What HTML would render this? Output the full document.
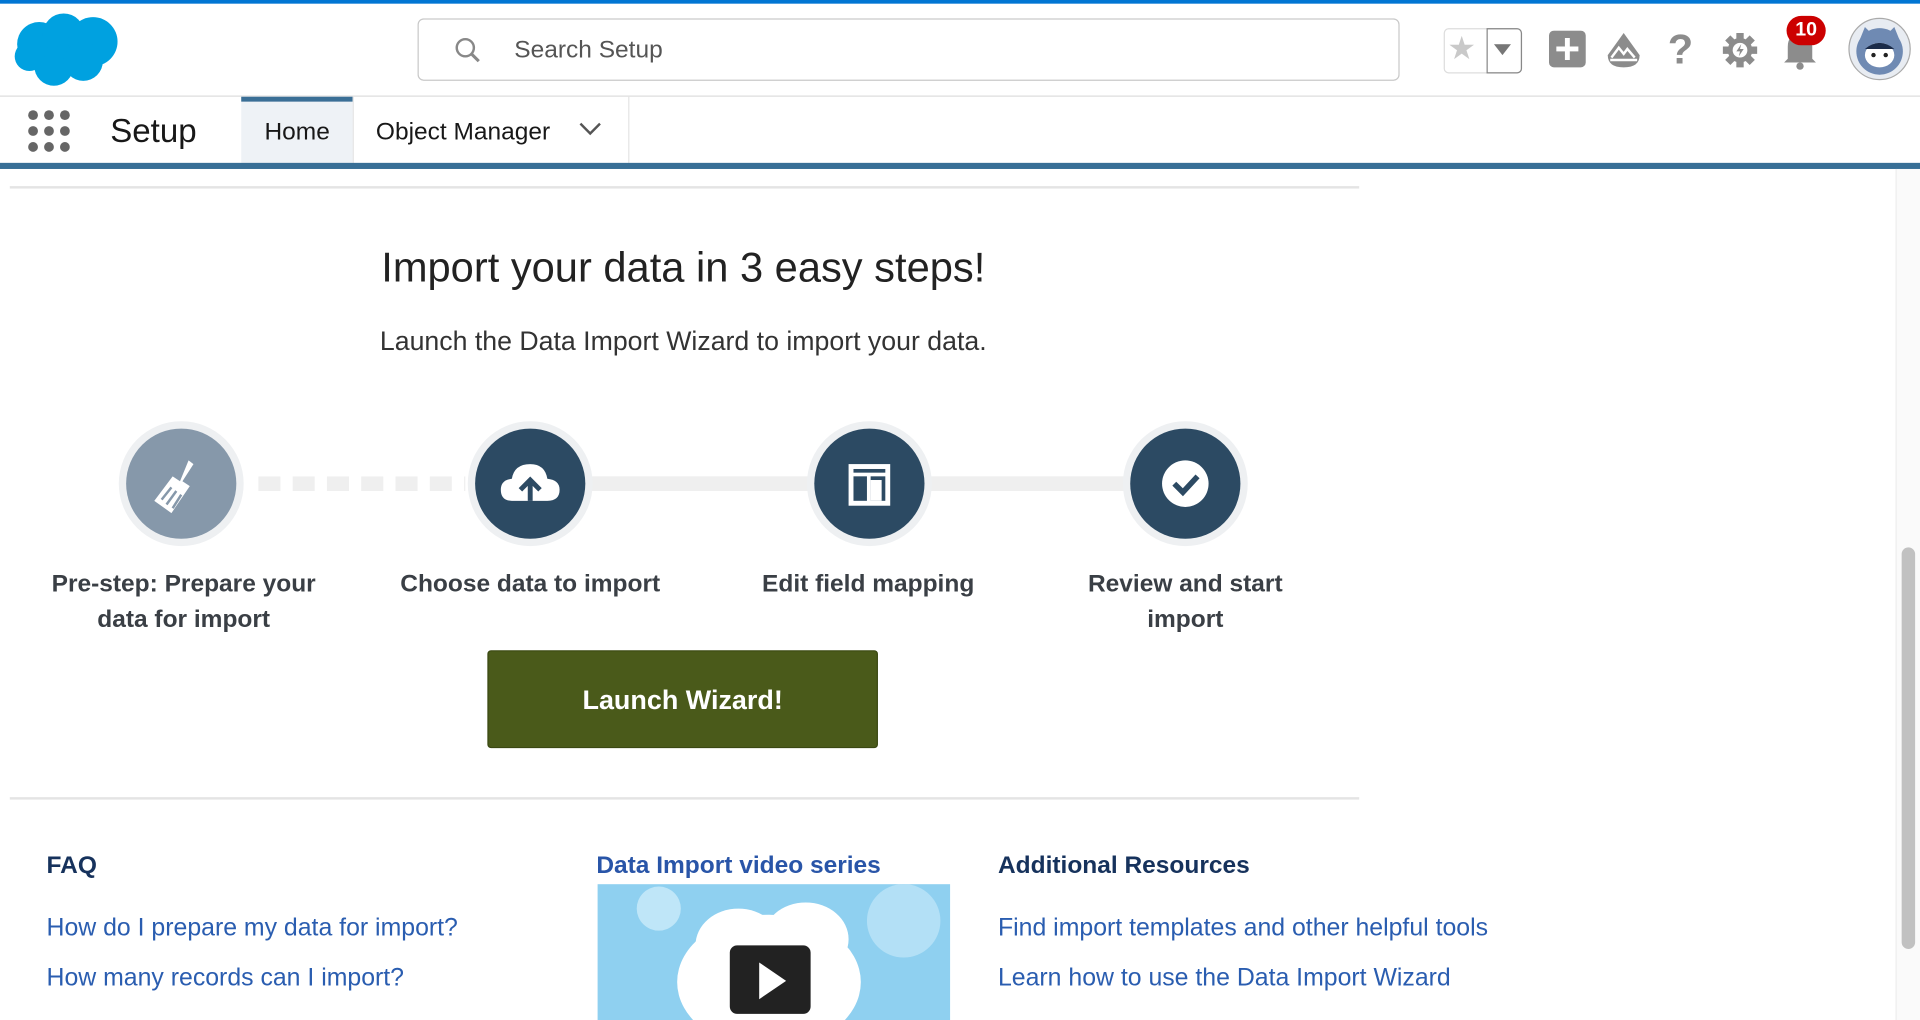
<!DOCTYPE html>
<html><head><meta charset="utf-8"><style>
html,body{margin:0;padding:0;width:1920px;height:1020px;overflow:hidden;background:#fff;font-family:"Liberation Sans",sans-serif}
#w{position:absolute;left:0;top:0;width:1568px;height:833px;transform:scale(1.2245);transform-origin:0 0;}
.a{position:absolute}
.lbl{position:absolute;font-weight:bold;font-size:20px;color:#3a3f45;text-align:center;line-height:29px;width:260px}
.lnk{position:absolute;font-size:20.3px;color:#2a5db0}
.h{position:absolute;font-size:20px;font-weight:bold;color:#16325c}
.circ{position:absolute;width:90px;height:90px;border-radius:50%;box-shadow:0 0 0 6px #eef0f2;}
</style></head><body><div id="w">
<div class="a" style="left:0;top:0;width:1568px;height:3px;background:#0176d3"></div>
<div class="a" style="left:0;top:78px;width:1568px;height:1px;background:#ddd"></div>
<svg class="a" style="left:10px;top:8px" width="90" height="64" viewBox="0 0 90 64"><g fill="#00a1e0"><circle cx="22" cy="28" r="18"/><circle cx="42" cy="20" r="17"/><circle cx="66" cy="26" r="20"/><circle cx="34" cy="46" r="16"/><circle cx="58" cy="42" r="16"/><circle cx="14" cy="38" r="12"/></g></svg>
<div class="a" style="left:341px;top:15px;width:800px;height:49px;border:1px solid #c9c9c9;border-radius:5px"></div>
<svg class="a" style="left:371px;top:30px" width="22" height="22" viewBox="0 0 22 22"><circle cx="9" cy="9" r="7" fill="none" stroke="#888" stroke-width="2"/><path d="M14 14l6 6" stroke="#888" stroke-width="2.5"/></svg>
<div class="a" style="left:420px;top:30px;font-size:20px;color:#555">Search Setup</div>
<div class="a" style="left:1179px;top:23px;width:62px;height:35px;border:1px solid #ddd;border-radius:4px"></div>
<div class="a" style="left:1214px;top:23px;width:27px;height:35px;border:1px solid #888;border-radius:0 4px 4px 0"></div>
<div class="a" style="left:1182px;top:24px;font-size:26px;color:#c9c9c9">★</div>
<svg class="a" style="left:1220px;top:36px" width="14" height="10"><path d="M0 0h14L7 9z" fill="#777"/></svg>
<svg class="a" style="left:1265px;top:25px" width="32" height="32"><rect width="30" height="30" rx="4" fill="#8c8c8c"/><path d="M15 6v18M6 15h18" stroke="#fff" stroke-width="4"/></svg>
<svg class="a" style="left:1310px;top:25px" width="32" height="32" viewBox="0 0 32 32"><path d="M16 2L3 20q0 10 13 10q13 0 13-10z" fill="#8c8c8c"/><path d="M6 22l6-8 4 5 3-4 6 7M5 24h22" stroke="#fff" stroke-width="2" fill="none"/></svg>
<div class="a" style="left:1362px;top:22px;font-size:34px;color:#8c8c8c;font-weight:bold">?</div>
<svg class="a" style="left:1405px;top:25px" width="32" height="32" viewBox="0 0 32 32"><circle cx="16" cy="16" r="10" fill="#8c8c8c"/><g stroke="#8c8c8c" stroke-width="6"><path d="M16 2v28M2 16h28M6 6l20 20M26 6L6 26"/></g><circle cx="16" cy="16" r="6" fill="#fff"/><path d="M17 11l-4 6h3l-1 4 4-6h-3z" fill="#8c8c8c"/></svg>
<svg class="a" style="left:1454px;top:22px" width="32" height="36" viewBox="0 0 32 36"><path d="M6 26V16q0-10 10-10q10 0 10 10v10l3 3H3z" fill="#8c8c8c"/><circle cx="16" cy="32" r="3" fill="#8c8c8c"/></svg>
<div class="a" style="left:1459px;top:13px;width:32px;height:24px;border-radius:12px;background:#c00;color:#fff;font-weight:bold;font-size:16px;text-align:center;line-height:24px">10</div>
<svg class="a" style="left:1509px;top:14px" width="52" height="52" viewBox="0 0 52 52"><circle cx="26" cy="26" r="25" fill="#e8ecf2" stroke="#aaa"/><circle cx="26" cy="28" r="19" fill="#6f8ab3"/><path d="M10 18l4-10 8 8M42 18l-4-10-8 8" fill="#6f8ab3"/><ellipse cx="26" cy="31" rx="12" ry="10" fill="#fff"/><path d="M14 26q12-10 24 0" fill="#1b2c4a"/><circle cx="21" cy="31" r="1.8" fill="#222"/><circle cx="31" cy="31" r="1.8" fill="#222"/></svg>
<svg class="a" style="left:22px;top:89px" width="36" height="36"><g fill="#666"><circle cx="5" cy="5" r="4"/><circle cx="18" cy="5" r="4"/><circle cx="31" cy="5" r="4"/><circle cx="5" cy="18" r="4"/><circle cx="18" cy="18" r="4"/><circle cx="31" cy="18" r="4"/><circle cx="5" cy="31" r="4"/><circle cx="18" cy="31" r="4"/><circle cx="31" cy="31" r="4"/></g></svg>
<div class="a" style="left:90px;top:92px;font-size:27px;color:#181818">Setup</div>
<div class="a" style="left:197px;top:79px;width:91px;height:55px;background:#eef2f6;border-top:4px solid #3a6f96;box-sizing:border-box"></div>
<div class="a" style="left:216px;top:97px;font-size:20px;color:#181818">Home</div>
<div class="a" style="left:288px;top:79px;width:224px;height:55px;border-left:1px solid #e5e5e5;border-right:1px solid #e5e5e5"></div>
<div class="a" style="left:307px;top:97px;font-size:20px;color:#181818">Object Manager</div>
<svg class="a" style="left:473px;top:100px" width="18" height="12"><path d="M1 1l8 8 8-8" stroke="#555" stroke-width="2" fill="none"/></svg>
<div class="a" style="left:0;top:133px;width:1568px;height:5px;background:#386f96"></div>
<div class="a" style="left:1548px;top:138px;width:20px;height:695px;background:#fafafa;border-left:1px solid #eee"></div>
<div class="a" style="left:1553px;top:447px;width:11px;height:328px;background:#c1c1c1;border-radius:6px"></div>
<div class="a" style="left:8px;top:152px;width:1102px;height:2px;background:#e4e4e4"></div>
<div class="a" style="left:0;top:200px;width:1116px;text-align:center;font-size:34px;color:#222">Import your data in 3 easy steps!</div>
<div class="a" style="left:0;top:266px;width:1116px;text-align:center;font-size:21.8px;color:#333">Launch the Data Import Wizard to import your data.</div>
<div class="a" style="left:478px;top:389px;width:440px;height:12px;background:#efefef"></div>
<svg class="a" style="left:205px;top:389px" width="180" height="12"><path d="M6 6H175" stroke="#efefef" stroke-width="12" stroke-dasharray="18 10"/></svg>
<div class="circ" style="left:103px;top:350px;background:#8698aa"></div>
<div class="circ" style="left:388px;top:350px;background:#2c4a63"></div>
<div class="circ" style="left:665px;top:350px;background:#2c4a63"></div>
<div class="circ" style="left:923px;top:350px;background:#2c4a63"></div>
<svg class="a" style="left:124px;top:372px" width="48" height="48" viewBox="0 0 48 48"><path d="M30 4l4 3-9 14 6 4-15 22-14-10 15-20 6 4z" fill="#fff"/><path d="M8 36l8-10M12 40l8-11M17 43l7-11" stroke="#8698aa" stroke-width="2"/></svg>
<svg class="a" style="left:408px;top:375px" width="50" height="40" viewBox="0 0 50 40"><path d="M10 34q-9 0-9-9q0-8 9-9q2-12 15-12q12 0 14 12q10 1 10 9q0 9-10 9z" fill="#fff"/><path d="M25 34V18M17 25l8-8 8 8" stroke="#2c4a63" stroke-width="4" fill="none"/></svg>
<svg class="a" style="left:692px;top:378px" width="36" height="36"><rect x="1" y="1" width="34" height="34" fill="#fff"/><rect x="5" y="11" width="11" height="20" fill="#2c4a63"/><rect x="19" y="11" width="12" height="20" fill="#2c4a63"/><rect x="5" y="5" width="26" height="3" fill="#2c4a63"/><rect x="19" y="14" width="9" height="17" fill="#fff"/></svg>
<svg class="a" style="left:948px;top:375px" width="40" height="40"><circle cx="20" cy="20" r="19" fill="#fff"/><path d="M11 20l7 7 12-13" stroke="#2c4a63" stroke-width="4.5" fill="none"/></svg>
<div class="lbl" style="left:20px;top:463px">Pre-step: Prepare your data for import</div>
<div class="lbl" style="left:303px;top:463px">Choose data to import</div>
<div class="lbl" style="left:579px;top:463px">Edit field mapping</div>
<div class="lbl" style="left:868px;top:463px;width:200px">Review and start import</div>
<div class="a" style="left:398px;top:531px;width:319px;height:80px;background:#4a5a1a;border:1px solid #3a4812;border-radius:3px;box-sizing:border-box;color:#fff;font-weight:bold;font-size:22px;text-align:center;line-height:80px">Launch Wizard!</div>
<div class="a" style="left:8px;top:651px;width:1102px;height:2px;background:#e4e4e4"></div>
<div class="h" style="left:38px;top:696px">FAQ</div>
<div class="h" style="left:487px;top:696px;color:#2955a8">Data Import video series</div>
<div class="h" style="left:815px;top:696px">Additional Resources</div>
<div class="lnk" style="left:38px;top:747px">How do I prepare my data for import?</div>
<div class="lnk" style="left:38px;top:788px">How many records can I import?</div>
<div class="lnk" style="left:815px;top:747px">Find import templates and other helpful tools</div>
<div class="lnk" style="left:815px;top:788px">Learn how to use the Data Import Wizard</div>
<svg class="a" style="left:488px;top:722px" width="288" height="111" viewBox="0 0 288 111"><rect width="288" height="111" fill="#8fd0f0"/><circle cx="50" cy="20" r="18" fill="#bfe6f8"/><circle cx="250" cy="30" r="30" fill="#b3e0f6"/><ellipse cx="140" cy="80" rx="75" ry="55" fill="#fff"/><ellipse cx="115" cy="50" rx="35" ry="30" fill="#fff"/><ellipse cx="170" cy="45" rx="35" ry="30" fill="#fff"/><rect x="108" y="50" width="66" height="56" rx="6" fill="#222"/><path d="M132 64v30l22-15z" fill="#fff"/></svg>
</div></body></html>
